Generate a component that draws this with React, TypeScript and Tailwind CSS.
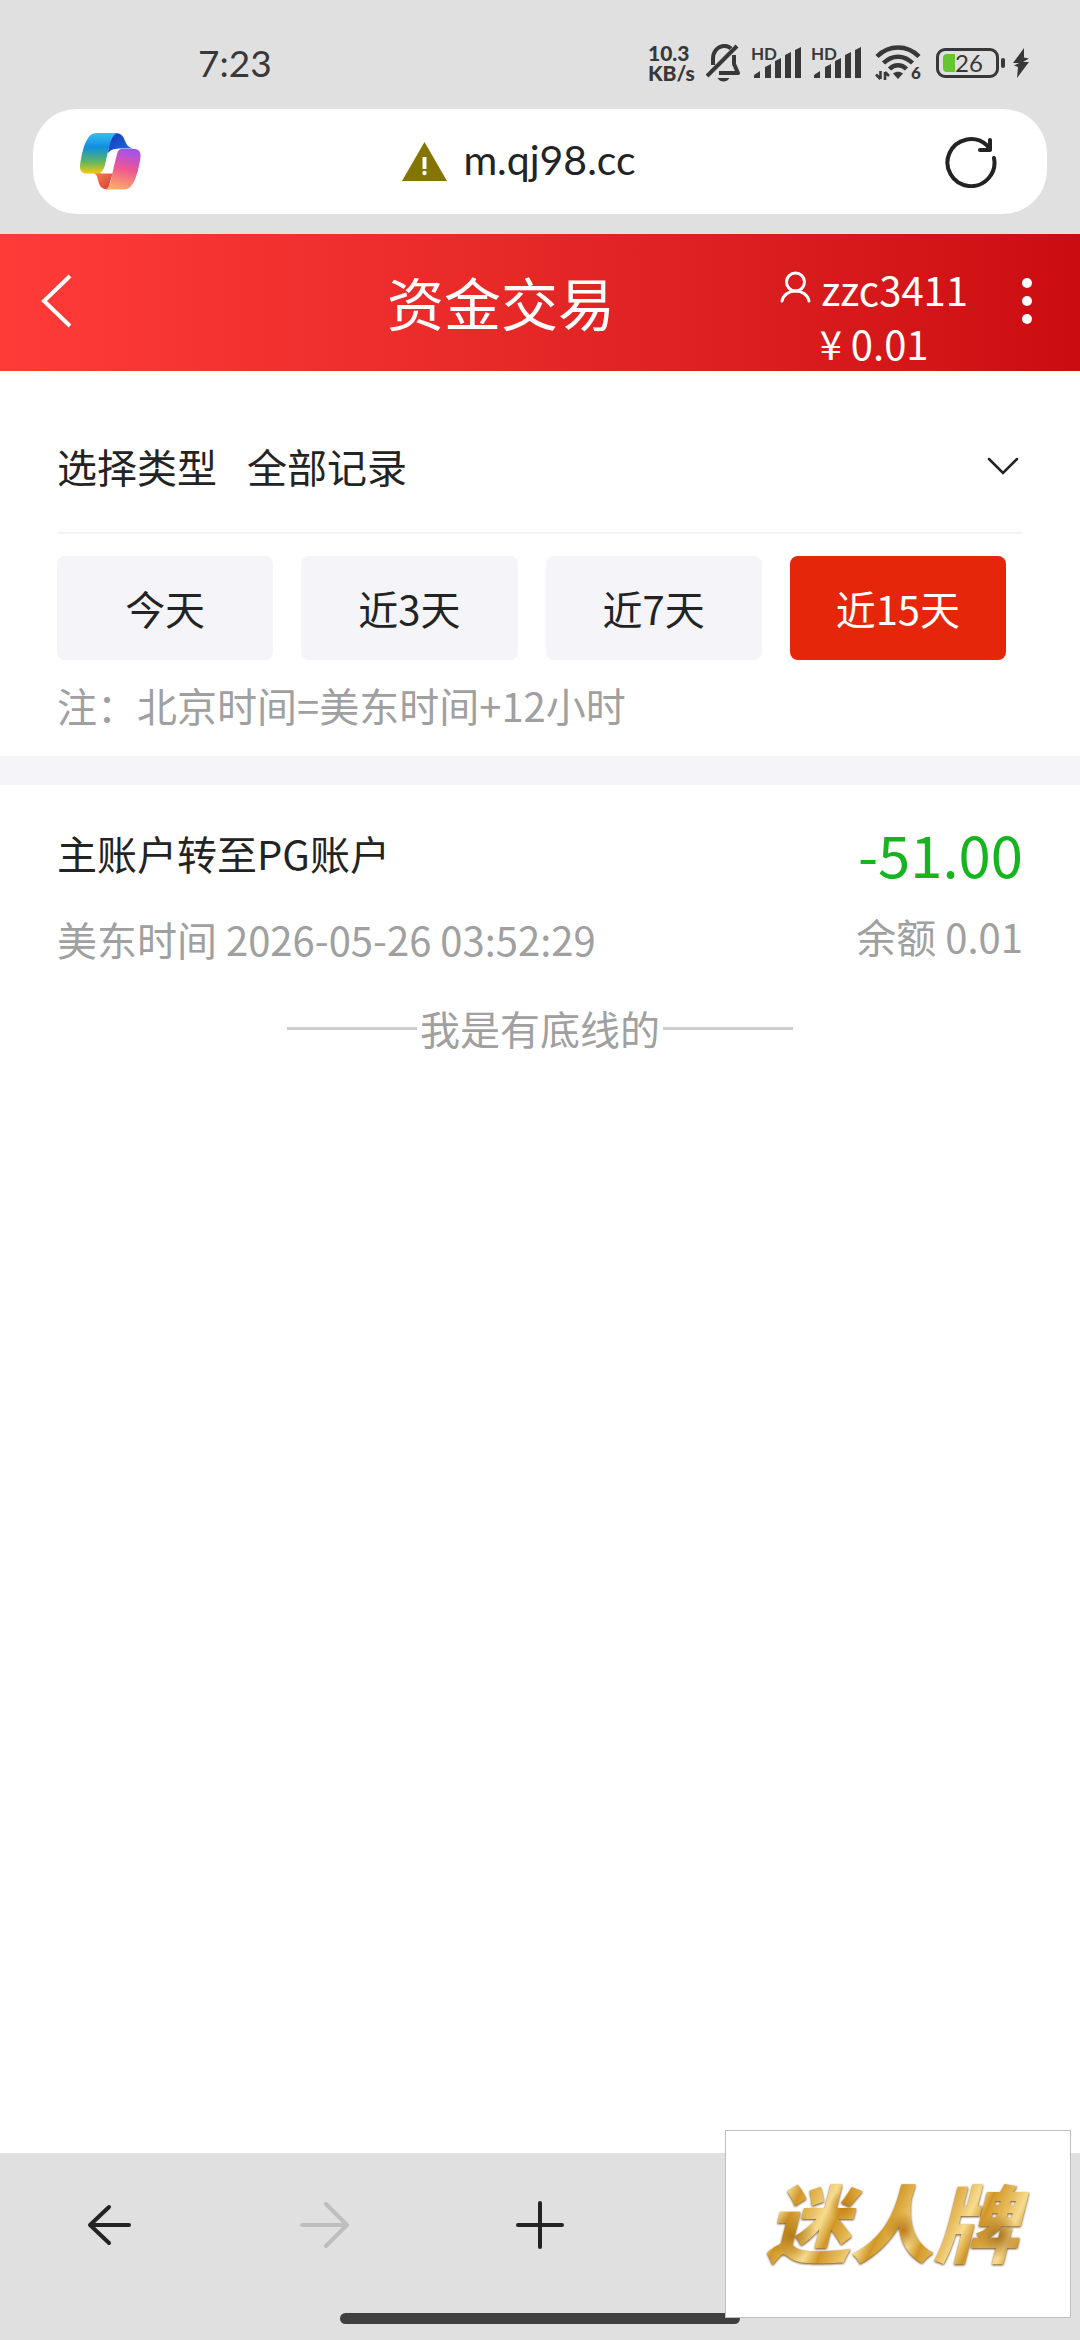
import { useState } from 'react'

const RANGES = ['今天', '近3天', '近7天', '近15天']

interface Transfer {
  title: string
  time: string
  amount: string
  balance: string
}

const TRANSFERS: Transfer[] = [
  { title: '主账户转至PG账户', time: '2026-05-26 03:52:29', amount: '-51.00', balance: '0.01' },
]

function BellOff() {
  return (
    <svg className="w-[34px] h-[38px]" viewBox="0 0 34 38" fill="none" stroke="#383838" strokeWidth="4">
      <path d="M7 21V15C7 8 11 3 17 2C20 1.6 23 2.6 25 4.5" />
      <path d="M28 11V20L32 29H13" strokeLinejoin="round" />
      <path d="M1 32L31 2" />
      <path d="M11.500 34h12c-1.500 2.500-3.500 3.500-6 3.500s-4.500-1-6-3.500z" fill="#383838" stroke="none" />
    </svg>
  )
}

function Signal() {
  return (
    <svg className="w-[50px] h-[34px] overflow-visible" viewBox="0 0 50 34" fill="#383838">
      <text x="-1" y="14" fontSize="17" fontWeight="700" fontFamily="Lato, sans-serif">HD</text>
      <path d="M2 32v-3l6-4v7zM13 32V21l6-3v14zM23 32V15l6-3v20zM33 32V9l6-3v26zM43 32V4l6-3v31z" />
    </svg>
  )
}

function Wifi() {
  return (
    <svg className="w-[46px] h-[36px] overflow-visible" viewBox="0 0 46 36" fill="none" stroke="#383838" strokeWidth="4.500">
      <path d="M2 11.500C14-.5 32-.5 44 11.500" />
      <path d="M8.500 18C17 9.500 29 9.500 37.500 18" />
      <path d="M14.500 24C19.500 19 26.500 19 31.500 24" />
      <path d="M18 28.500c3-2.500 7-2.500 10 0l-5 5.500z" fill="#383838" stroke="none" />
      <path d="M5.500 26v8M5.500 34L1 29.500M10 35v-8M10 27l4 4" strokeWidth="2.600" />
      <text x="36" y="34" fontSize="17" fontWeight="900" fontFamily="Lato, sans-serif" fill="#383838" stroke="none">6</text>
    </svg>
  )
}

function Battery() {
  return (
    <div className="flex items-center gap-[2px]">
      <div className="flex h-[30px] w-[63px] items-center rounded-[9px] border-[3px] border-[#383838] pl-1">
        <div className="h-[18px] w-3 shrink-0 rounded-l-sm bg-[#65c72f]" />
        <span className="font-[Lato] text-2xl leading-6 text-[#383838]">26</span>
      </div>
      <div className="h-[10px] w-1 rounded-full bg-[#383838]" />
    </div>
  )
}

function StatusBar() {
  return (
    <div className="flex h-[109px] items-center pt-4 pr-[50px] pl-[198px] text-[#383838]">
      <span className="flex-1 font-[Lato] text-[37px] leading-10">7:23</span>
      <div className="flex items-center">
        <p className="mr-2 w-[50px] font-[Lato] text-[21px] leading-5 font-black">
          10.3
          <br />
          KB/s
        </p>
        <BellOff />
        <div className="mr-[13px] ml-3 flex gap-[10px]">
          <Signal />
          <Signal />
        </div>
        <Wifi />
        <div className="mr-[7px] ml-[15px]">
          <Battery />
        </div>
        <svg className="h-[30px] w-[18px]" viewBox="0 0 18 30" fill="#383838">
          <path d="M12 0L1 15h6l-5 2.500L6 19 5 30 17 14h-6l6-3.500-5-1z" />
        </svg>
      </div>
    </div>
  )
}

function CopilotLogo() {
  return (
    <svg className="h-[57px] w-[61px]" viewBox="0 0 61 57">
      <defs>
        <linearGradient id="cool" x1="0" y1="0" x2="0" y2="1">
          <stop offset="0" stopColor="#36bdf5" />
          <stop offset=".35" stopColor="#0f8fdf" />
          <stop offset=".7" stopColor="#5cb564" />
          <stop offset="1" stopColor="#f4cb0b" />
        </linearGradient>
        <linearGradient id="navy" x1="0" y1="0" x2="1" y2="1">
          <stop offset="0" stopColor="#1238b4" />
          <stop offset="1" stopColor="#2371e4" />
        </linearGradient>
        <linearGradient id="warm" x1=".5" y1="0" x2=".3" y2="1">
          <stop offset="0" stopColor="#a552ec" />
          <stop offset=".45" stopColor="#ee5594" />
          <stop offset="1" stopColor="#fdae62" />
        </linearGradient>
        <linearGradient id="ember" x1="0" y1="0" x2="1" y2="1">
          <stop offset="0" stopColor="#ff8b4c" />
          <stop offset="1" stopColor="#d13b3c" />
        </linearGradient>
      </defs>
      <path d="M35 0C45 0 44 9 48 13C50 15 53 15.500 55 15.500H39C33 16 30 18 28 20L29 8z" fill="url(#navy)" />
      <path d="M13 40C19 41 17 50 21 54C23 56 26 56.500 28 56L34 36L22 40z" fill="url(#ember)" />
      <path d="M17 0H39C30 0 29 17 25 32C23.500 38 21 40.500 16 40.500H7C1 40.500-1 37 .5 29C2 20 4 11 8 5C10 1.500 13 0 17 0z" fill="url(#cool)" />
      <path d="M29 20C30 17 33 16 38 16H43L36 38C35 40 33 40.500 30 40.500H20C24 39 25 35 26 31z" fill="#fff" />
      <path d="M41 16H54C60 16 61.500 20 60 28C58 38 56 46 52 52C50 55 47 56.500 43 56.500H25C31 55 31 45 34 33L37 21C38 18 39 16.500 41 16z" fill="url(#warm)" />
    </svg>
  )
}

function AddressBar() {
  return (
    <div className="mx-[33px] mb-5 flex h-[105px] items-center rounded-[44px] bg-white pr-[50px] pl-[47px]">
      <button aria-label="Copilot">
        <CopilotLogo />
      </button>
      <div className="flex flex-1 items-center justify-center gap-4 pr-12">
        <svg className="h-[39px] w-[45px]" viewBox="0 0 45 39">
          <path d="M22.500 0L45 39H0z" fill="#847500" />
          <path d="M20.500 15h4v12h-4z" fill="#fff" />
          <circle cx="22.500" cy="31" r="2.200" fill="#fff" />
        </svg>
        <span className="pb-1 font-[Lato] text-[41px] leading-[48px] text-[#232323]">m.qj98.cc</span>
      </div>
      <button aria-label="刷新">
        <svg className="size-[52px]" viewBox="0 0 52 52" fill="none" stroke="#232323" strokeWidth="4" strokeLinecap="round">
          <path d="M49 22A23.500 23.500 0 1 1 41.500 9L44 12" />
          <path d="M45 4V14H35" strokeLinejoin="round" />
        </svg>
      </button>
    </div>
  )
}

function PageHeader() {
  return (
    <header className="flex h-[137px] bg-linear-to-r from-[#ff3b38] to-[#cb0c11] text-white">
      <div className="grid flex-1 grid-cols-[1fr_auto_1fr] pl-10">
        <button aria-label="返回" className="justify-self-start pb-1">
          <svg className="h-[54px] w-8" viewBox="0 0 32 54" fill="none" stroke="#fff" strokeWidth="4">
            <path d="M30 2L4 27L30 52" />
          </svg>
        </button>
        <h1 className="mr-10 self-center pb-1 text-[57px] leading-[72px]">资金交易</h1>
        <div className="justify-self-end pt-7 pr-[34px] text-center text-[40px] leading-[54px]">
          <div className="flex items-center gap-[10px]">
            <svg className="mb-1 h-8 w-[31px]" viewBox="0 0 31 32" fill="none" stroke="#fff" strokeWidth="3" strokeLinecap="round">
              <circle cx="15.500" cy="11" r="9" />
              <path d="M2 30C3 24 9 20 15.500 20S28 24 29 30" />
            </svg>
            <span>zzc3411</span>
          </div>
          <div>¥ 0.01</div>
        </div>
      </div>
      <button aria-label="更多" className="flex w-[78px] flex-col items-center justify-center gap-2 pr-7 pb-1">
        <span className="size-[10px] rounded-full bg-white" />
        <span className="size-[10px] rounded-full bg-white" />
        <span className="size-[10px] rounded-full bg-white" />
      </button>
    </header>
  )
}

function Filters() {
  const [range, setRange] = useState('近15天')

  return (
    <section className="px-[57px] pt-9">
      <div className="flex h-[127px] items-center border-b-2 border-[#f4f4f6] pb-2">
        <label htmlFor="type" className="mr-[30px]">选择类型</label>
        <select id="type" className="flex-1 appearance-none bg-transparent">
          <option>全部记录</option>
        </select>
        <svg className="mr-1 h-[18px] w-8" viewBox="0 0 32 18" fill="none" stroke="#232323" strokeWidth="2.500" strokeLinecap="round">
          <path d="M2 2L16 16L30 2" />
        </svg>
      </div>
      <div className="grid grid-cols-4 gap-7 pt-[22px] pr-[17px]">
        {RANGES.map(r => (
          <button
            key={r}
            onClick={() => setRange(r)}
            className={`h-[104px] rounded-lg ${r === range ? 'bg-[#e6260b] text-white' : 'bg-[#f4f4f9]'}`}
          >
            {r}
          </button>
        ))}
      </div>
      <p className="pt-4 pb-[22px] leading-[58px] text-[#a0a0a0]">注：北京时间=美东时间+12小时</p>
    </section>
  )
}

function TransferRow({ item }: { item: Transfer }) {
  return (
    <li className="flex justify-between">
      <div>
        <div className="leading-[80px]">{item.title}</div>
        <div className="leading-[92px] text-[#a0a0a0]">美东时间 {item.time}</div>
      </div>
      <div className="text-right">
        <div className="text-[58px] leading-[80px] text-[#16b41e]">{item.amount}</div>
        <div className="leading-[86px] text-[#a0a0a0]">余额 {item.balance}</div>
      </div>
    </li>
  )
}

function BrowserToolbar() {
  return (
    <footer className="relative bg-[#e0e0e0]">
      <nav className="grid h-[144px] grid-cols-5 place-items-center">
        <button aria-label="后退">
          <svg className="size-[50px]" viewBox="0 0 50 50" fill="none" stroke="#232323" strokeWidth="4" strokeLinecap="round" strokeLinejoin="round">
            <path d="M46 25H7M26 7L7 25L26 43" />
          </svg>
        </button>
        <button aria-label="前进" disabled>
          <svg className="size-[50px]" viewBox="0 0 50 50" fill="none" stroke="#bebebe" strokeWidth="4" strokeLinecap="round" strokeLinejoin="round">
            <path d="M3 25H48M27 4L48 25L27 46" />
          </svg>
        </button>
        <button aria-label="新建标签页">
          <svg className="size-[50px]" viewBox="0 0 50 50" fill="none" stroke="#232323" strokeWidth="4" strokeLinecap="round">
            <path d="M3 25H47M25 3V47" />
          </svg>
        </button>
      </nav>
      <div className="flex h-[43px] justify-center pt-4">
        <div className="h-[11px] w-[400px] rounded-full bg-[#404040]" />
      </div>
      <div className="absolute right-[9px] bottom-[22px] flex h-[188px] w-[346px] items-center justify-center border border-[#bdc0bf] bg-white">
        <span className="bg-[radial-gradient(circle_at_30%_35%,#c27a0ecc_0px,transparent_16px),radial-gradient(circle_at_52%_55%,#b36b0acc_0px,transparent_18px),radial-gradient(circle_at_88%_60%,#9a5c08cc_0px,transparent_22px),radial-gradient(circle_at_10%_60%,#a86f0acc_0px,transparent_24px),repeating-linear-gradient(115deg,#d39a2a_0px,#e8be5e_18px,#f6dc90_30px,#cf9220_44px)] bg-clip-text pr-3 pb-2 text-[84px] leading-[112px] font-black text-transparent italic drop-shadow-[0_1px_1px_#6b430d]">
          迷人牌
        </span>
      </div>
    </footer>
  )
}

export default function App() {
  return (
    <div className="flex min-h-screen flex-col bg-white font-['Noto_Sans_CJK_SC',sans-serif] text-[40px] leading-[58px] text-[#232323]">
      <div className="bg-[#e0e0e0]">
        <StatusBar />
        <AddressBar />
      </div>
      <PageHeader />
      <main className="flex-1">
        <Filters />
        <div className="h-[29px] bg-[#f4f4f9]" />
        <ul className="px-[57px] pt-7">
          {TRANSFERS.map(t => (
            <TransferRow key={t.time} item={t} />
          ))}
        </ul>
        <div className="flex items-center justify-center gap-[3px] pt-[14px] text-[#a0a0a0]">
          <span className="h-[3px] w-[130px] bg-[#cccccc]" />
          我是有底线的
          <span className="h-[3px] w-[130px] bg-[#cccccc]" />
        </div>
      </main>
      <BrowserToolbar />
    </div>
  )
}
